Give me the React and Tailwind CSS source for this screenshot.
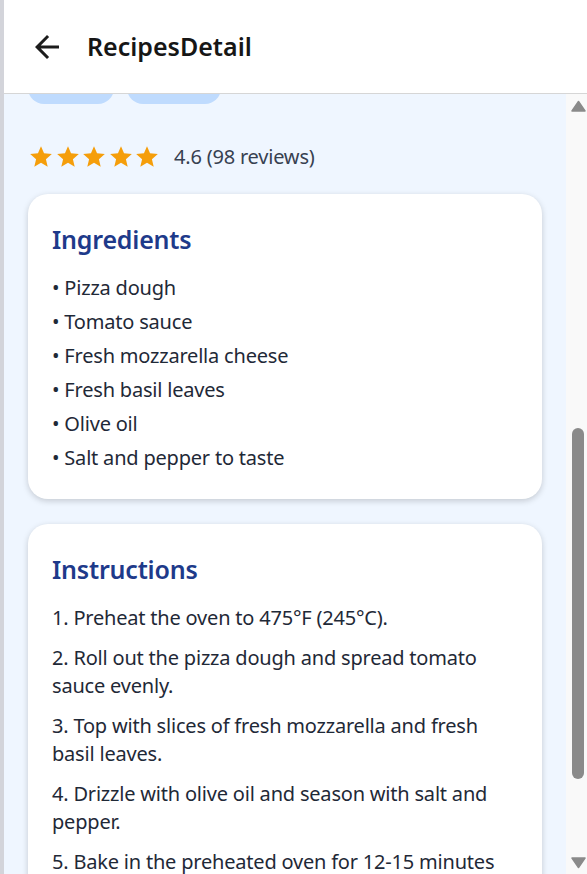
const ingredients = [
  'Pizza dough',
  'Tomato sauce',
  'Fresh mozzarella cheese',
  'Fresh basil leaves',
  'Olive oil',
  'Salt and pepper to taste',
];

const steps = [
  'Preheat the oven to 475°F (245°C).',
  'Roll out the pizza dough and spread tomato sauce evenly.',
  'Top with slices of fresh mozzarella and fresh basil leaves.',
  'Drizzle with olive oil and season with salt and pepper.',
  'Bake in the preheated oven for 12-15 minutes or until the crust is golden.',
  'Let it cool for a minute, slice and serve.',
];

const StarIcon = () => (
  <svg width="26" height="26" viewBox="0 0 24 24" className="fill-[#f59e0b] shrink-0">
    <path d="M12 17.27L18.18 21l-1.64-7.03L22 9.24l-7.19-.61L12 2 9.19 8.63 2 9.24l5.46 4.73L5.82 21z" />
  </svg>
);

const BackIcon = () => (
  <svg width="36" height="36" viewBox="0 0 24 24" className="fill-[#1c1c1c] shrink-0">
    <path d="M20 11H7.83l5.59-5.59L12 4l-8 8 8 8 1.41-1.41L7.83 13H20v-2z" />
  </svg>
);

const Card = ({ title, children, className = '' }) => (
  <div className={`bg-white rounded-[20px] shadow-[0_2px_6px_rgba(0,0,0,0.18)] px-6 pt-[29px] ${className}`}>
    <h2 className="text-[25px] leading-8 font-semibold text-[#1e3a8a] mb-[19px]">{title}</h2>
    {children}
  </div>
);

export default function App() {
  return (
    <div
      className="flex h-[874px] w-full overflow-hidden bg-white"
      style={{ fontFamily: '"Noto Sans", sans-serif' }}
    >
      {/* window edge */}
      <div className="w-1 shrink-0 bg-[#d3d4da]" />

      <div className="flex flex-1 flex-col min-w-0">
        {/* Header */}
        <header className="relative z-10 h-[94px] shrink-0 bg-white border-b border-[#d6d6d6] flex items-center pl-[25px] gap-[22px]">
          <BackIcon />
          <h1 className="text-[25px] font-semibold text-[#161616]">RecipesDetail</h1>
        </header>

        <div className="flex flex-1 min-h-0">
          {/* Scrolled content */}
          <main className="flex-1 min-w-0 bg-[#eff6ff] overflow-hidden">
            <div className="px-6 -mt-[22px] tracking-[-0.2px]">
              {/* Tags */}
              <div className="flex gap-[13px]">
                <span className="w-[86px] h-8 rounded-full bg-[#bfdbfe]" />
                <span className="w-[94px] h-8 rounded-full bg-[#bfdbfe]" />
              </div>

              {/* Rating */}
              <div className="mt-[40px] flex items-center gap-[14px] h-[26px]">
                <div className="flex gap-[0.5px]">
                  <StarIcon />
                  <StarIcon />
                  <StarIcon />
                  <StarIcon />
                  <StarIcon />
                </div>
                <span className="text-xl leading-7 text-[#374151]">4.6 (98 reviews)</span>
              </div>

              {/* Ingredients */}
              <Card title="Ingredients" className="mt-6 pb-[27px]">
                <ul className="flex flex-col gap-1.5">
                  {ingredients.map((item) => (
                    <li key={item} className="text-xl leading-7 text-[#1f2937]">
                      • {item}
                    </li>
                  ))}
                </ul>
              </Card>

              {/* Instructions */}
              <Card title="Instructions" className="mt-[25px] pb-6">
                <ol className="flex flex-col gap-3">
                  {steps.map((step, i) => (
                    <li key={i} className="text-xl leading-7 text-[#1f2937]">
                      {i + 1}. {step}
                    </li>
                  ))}
                </ol>
              </Card>
            </div>
          </main>

          {/* Scrollbar */}
          <div className="w-[21px] shrink-0 bg-[#f9f9f9] flex flex-col items-center">
            <svg width="15" height="12" viewBox="0 0 15 12" className="mt-[6px] ml-[3px] fill-[#8a8a8a]">
              <path d="M7.5 1.5 L14 11 L1 11 Z" strokeLinejoin="round" stroke="#8a8a8a" strokeWidth="1.5" />
            </svg>
            <div className="mt-[316px] ml-[2px] w-3 h-[351px] rounded-full bg-[#8a8a8a]" />
            <div className="flex-1" />
            <svg width="15" height="12" viewBox="0 0 15 12" className="mb-[5px] ml-[3px] fill-[#8a8a8a]">
              <path d="M1 1 L14 1 L7.5 10.5 Z" strokeLinejoin="round" stroke="#8a8a8a" strokeWidth="1.5" />
            </svg>
          </div>
        </div>
      </div>
    </div>
  );
}
